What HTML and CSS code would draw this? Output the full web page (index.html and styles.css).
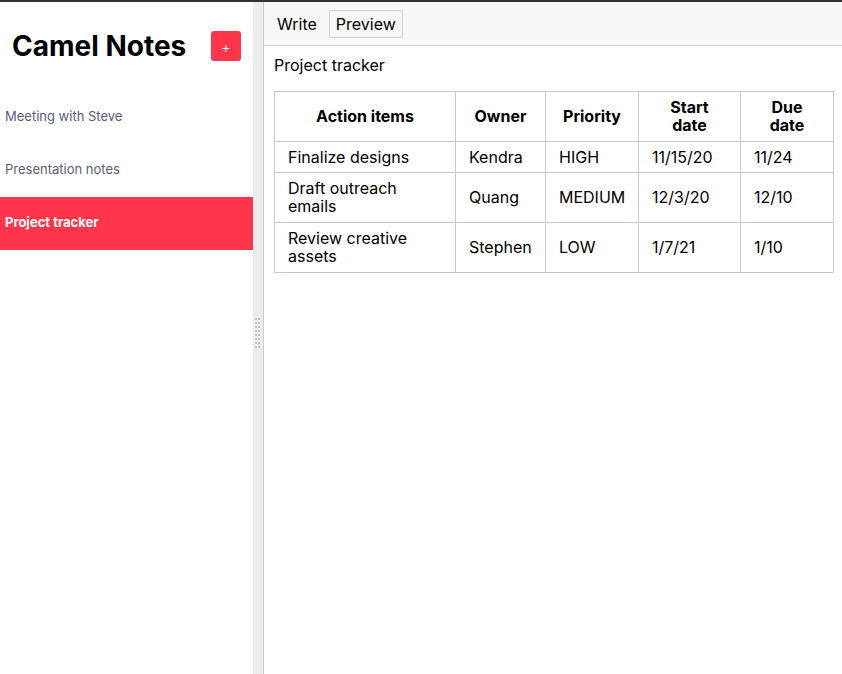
FILE: index.html
```html
<!DOCTYPE html>
<html>
<head>
<meta charset="utf-8">
<link rel="stylesheet" href="styles.css">
</head>
<body>
<div class="app">
  <aside class="sidebar">
    <div class="sidebar-head">
      <h1 class="title">Camel Notes</h1>
      <button class="add-btn">+</button>
    </div>
    <ul class="note-list">
      <li class="note">Meeting with Steve</li>
      <li class="note">Presentation notes</li>
      <li class="note active">Project tracker</li>
    </ul>
  </aside>
  <div class="gutter">
    <div class="grip">
      <span></span><span></span><span></span><span></span><span></span><span></span><span></span><span></span>
      <span></span><span></span><span></span><span></span><span></span><span></span><span></span><span></span>
    </div>
  </div>
  <main class="main">
    <div class="toolbar">
      <button class="tab">Write</button>
      <button class="tab selected">Preview</button>
    </div>
    <div class="preview">
      <p class="doc-title">Project tracker</p>
      <table class="tracker">
        <colgroup>
          <col class="c1"><col class="c2"><col class="c3"><col class="c4"><col class="c5">
        </colgroup>
        <thead>
          <tr class="tall"><th>Action items</th><th>Owner</th><th>Priority</th><th>Start date</th><th>Due date</th></tr>
        </thead>
        <tbody>
          <tr><td>Finalize designs</td><td>Kendra</td><td>HIGH</td><td>11/15/20</td><td>11/24</td></tr>
          <tr class="tall"><td>Draft outreach emails</td><td>Quang</td><td>MEDIUM</td><td>12/3/20</td><td>12/10</td></tr>
          <tr class="tall"><td>Review creative assets</td><td>Stephen</td><td>LOW</td><td>1/7/21</td><td>1/10</td></tr>
        </tbody>
      </table>
    </div>
  </main>
</div>
</body>
</html>
```

FILE: styles.css
```css
* { box-sizing: border-box; }
html, body { margin: 0; padding: 0; height: 100%; }
body {
  font-family: Inter, "Noto Sans", sans-serif;
  color: #000;
  background: #fff;
  border-top: 2px solid #333;
  overflow: hidden;
}
.app {
  display: flex;
  height: 672px;
}
.sidebar {
  width: 253px;
  flex: none;
  background: #fff;
}
.sidebar-head {
  display: flex;
  justify-content: space-between;
  align-items: flex-start;
  padding: 29px 12px 0 12px;
  height: 89px;
}
.title {
  margin: 0;
  font-size: 28px;
  font-weight: 700;
  line-height: 30px;
}
.add-btn {
  width: 30px;
  height: 30px;
  border: none;
  border-radius: 3px;
  background: #ff364b;
  color: #fff;
  font-family: inherit;
  font-size: 14px;
  padding: 0;
  display: flex;
  align-items: center;
  justify-content: center;
}
.note-list {
  list-style: none;
  margin: 0;
  padding: 0;
}
.note {
  height: 53px;
  display: flex;
  align-items: center;
  padding: 0 0 3px 5px;
  font-size: 13px;
  color: #5a5e7c;
}
.note.active {
  background: #ff364b;
  color: #fff;
  font-weight: 700;
}
.gutter {
  width: 11px;
  flex: none;
  background: #ececec;
  border-right: 1px solid #cccccc;
  display: flex;
  align-items: center;
  justify-content: flex-start;
  padding-left: 2px;
}
.grip {
  display: grid;
  grid-template-columns: 2px 2px;
  grid-auto-rows: 2px;
  column-gap: 1px;
  row-gap: 2px;
  margin-top: -10px;
}
.grip span {
  display: block;
  background: #c8c8c8;
}
.main {
  flex: 1;
  display: flex;
  flex-direction: column;
}
.toolbar {
  height: 44px;
  background: #f8f8f8;
  border-bottom: 1px solid #cccccc;
  display: flex;
  align-items: flex-start;
  padding: 8px 5px 0 6px;
  gap: 5px;
}
.tab {
  font-family: inherit;
  font-size: 16px;
  height: 28px;
  padding: 0 6px;
  border: 1px solid transparent;
  border-radius: 2px;
  background: transparent;
  color: #000;
}
.tab.selected {
  border-color: #cfcfcf;
  background: #f7f7f7;
}
.preview {
  padding: 9px 9px 10px 10px;
}
.doc-title {
  margin: 0 0 16px 0;
  font-size: 16px;
  line-height: 20px;
}
.tracker {
  border-collapse: collapse;
  width: 559px;
  table-layout: fixed;
  font-size: 16px;
  line-height: 18px;
}
.tracker .c1 { width: 181px; }
.tracker .c2 { width: 90px; }
.tracker .c3 { width: 93px; }
.tracker .c4 { width: 102px; }
.tracker .c5 { width: 93px; }
.tracker tr { height: 31px; }
.tracker tr.tall { height: 50px; }
.tracker th, .tracker td {
  border: 1px solid #c8c9cf;
  padding: 6px 13px;
  text-align: left;
  vertical-align: middle;
}
.tracker tr.tall th, .tracker tr.tall td {
  padding: 5px 13px 7px;
}
.tracker th {
  text-align: center;
  font-weight: 700;
}
```
